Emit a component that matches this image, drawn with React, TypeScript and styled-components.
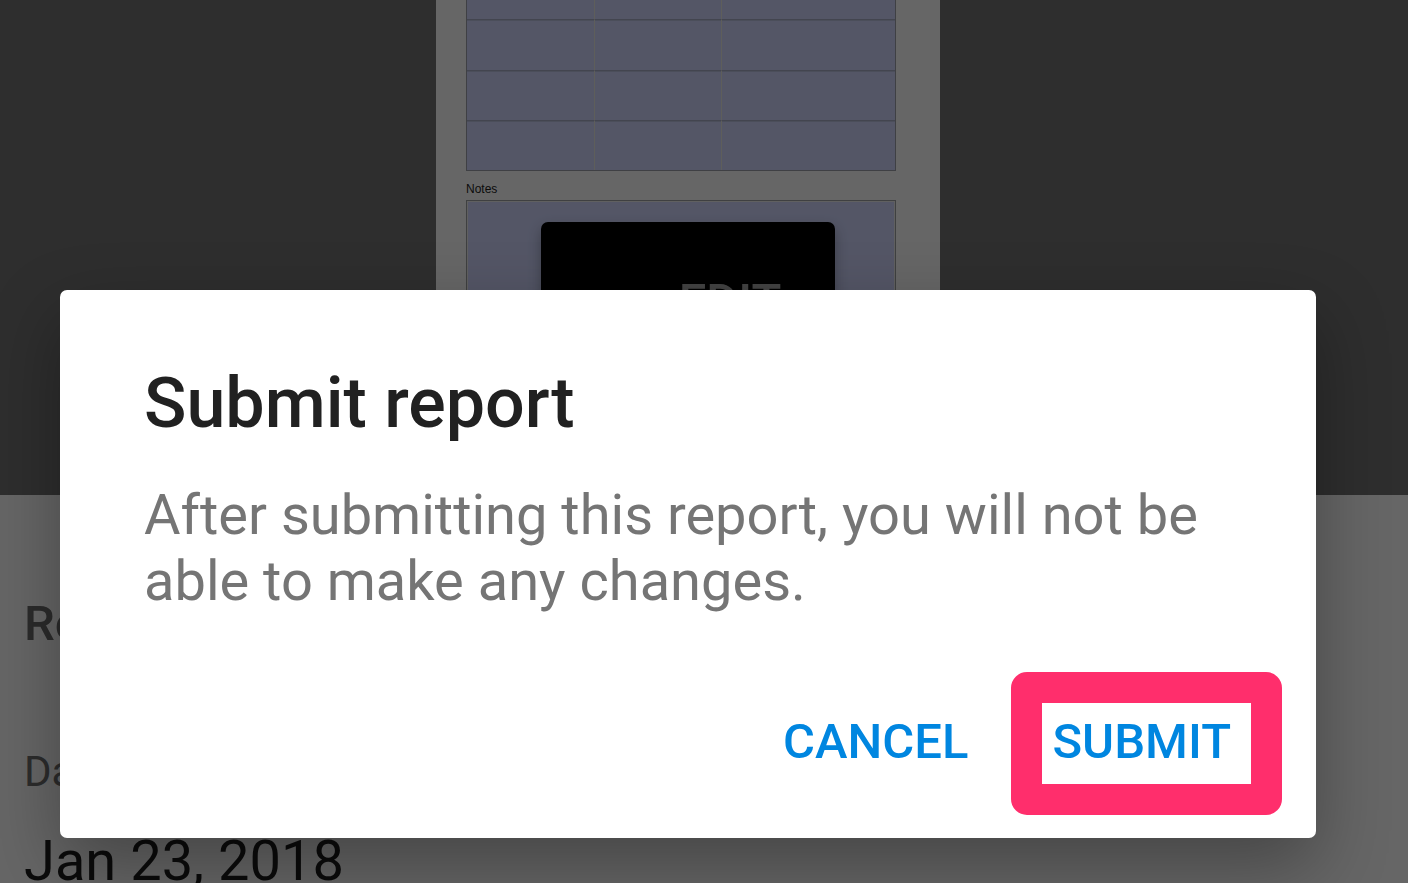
import React from "react";
import styled, { createGlobalStyle } from "styled-components";

const GlobalStyle = createGlobalStyle`
  *, *::before, *::after { box-sizing: border-box; }
  body { margin: 0; font-family: Roboto, "Liberation Sans", sans-serif; }
  h1, h2, p, dl, dt, dd { margin: 0; }
  button { border: 0; padding: 0; font-family: inherit; cursor: pointer; }
`;

const Page = styled.div`
  position: relative;
  height: 100vh;
  overflow: hidden;
  background: #ffffff;
`;

const Preview = styled.section`
  position: relative;
  display: flex;
  justify-content: center;
  height: 495px;
  padding-right: 32px;
  overflow: hidden;
  background: #737373;
`;

const Paper = styled.div`
  width: 504px;
  padding: 0 44px 0 30px;
  background: #ffffff;
`;

const FormTable = styled.table`
  width: 100%;
  table-layout: fixed;
  border-collapse: separate;
  border-spacing: 0;
  border: 1px solid #9da0aa;
  border-top: 0;
  background: #d1d7ff;
`;

const FormColumn = styled.col<{ $width: number }>`
  width: ${({ $width }) => $width}px;
`;

const FormCell = styled.td<{ $height: number }>`
  height: ${({ $height }) => $height}px;
  padding: 0;

  & + & {
    border-left: 1px solid #eceae4;
  }

  tr + tr > & {
    border-top: 1px solid #a8adc6;
    box-shadow: inset 0 1px #bcc2e2;
  }
`;

const NotesLabel = styled.label`
  display: block;
  padding: 11px 0 4px;
  font: 12px/14px "Liberation Sans", sans-serif;
  color: #222222;
`;

const NotesBox = styled.textarea`
  display: block;
  width: 100%;
  height: 340px;
  border: 1px solid #9da0a4;
  outline: 1px solid #f0f0f0;
  outline-offset: -2px;
  border-radius: 0;
  background: #d1d7ff;
  resize: none;
`;

const PreviewOverlay = styled.div`
  position: absolute;
  inset: 222px 32px auto 0;
  display: flex;
  justify-content: center;
`;

const EditButton = styled.button`
  width: 294px;
  height: 160px;
  padding: 0 0 0 84px;
  border-radius: 7px;
  background: #000000;
  box-shadow: 0 6px 14px rgba(0, 0, 0, 0.3);
  color: #a8a8a8;
  font-size: 49px;
  font-weight: 500;
  line-height: 58px;
`;

const Details = styled.section`
  padding: 100px 24px 0;
`;

const DetailsTitle = styled.h2`
  color: #6c6c6c;
  font-size: 49px;
  font-weight: 500;
  line-height: 58px;
`;

const FieldList = styled.dl`
  padding-top: 94px;
`;

const FieldName = styled.dt`
  color: #6e6e6e;
  font-size: 42px;
  line-height: 50px;
`;

const FieldValue = styled.dd`
  padding-top: 31px;
  color: #1c1c1c;
  font-size: 56px;
  line-height: 66px;
`;

const Scrim = styled.div`
  position: absolute;
  inset: 0;
  padding: 290px 92px 45px 60px;
  background: rgba(0, 0, 0, 0.6);
`;

const Dialog = styled.div`
  padding: 72px 34px 23px 84px;
  border-radius: 7px;
  background: #ffffff;
  box-shadow: 0 28px 72px rgba(0, 0, 0, 0.32);
`;

const DialogTitle = styled.h1`
  color: #212121;
  font-size: 70px;
  font-weight: 500;
  line-height: 82px;
`;

const DialogText = styled.p`
  padding: 38px 50px 0 0;
  color: #757575;
  font-size: 56px;
  line-height: 66px;
`;

const Actions = styled.div`
  display: flex;
  align-items: center;
  justify-content: flex-end;
  gap: 43px;
  padding-top: 58px;
`;

const ActionButton = styled.button`
  padding-bottom: 3px;
  background: transparent;
  color: #0086e0;
  font-size: 49px;
  font-weight: 500;
  line-height: 58px;
`;

const Highlight = styled.div`
  display: flex;
  align-items: center;
  height: 143px;
  padding: 0 20px 0 10px;
  border: 31px solid #ff2e6c;
  border-radius: 16px;
`;

const rowHeights = [19, 51, 50, 50];
const columnWidths = [127, 127, 174];

export default function App() {
  return (
    <>
      <GlobalStyle />
      <Page>
        <Preview>
          <Paper>
            <FormTable>
              <colgroup>
                {columnWidths.map((width, i) => (
                  <FormColumn key={i} $width={width} />
                ))}
              </colgroup>
              <tbody>
                {rowHeights.map((height, row) => (
                  <tr key={row}>
                    {columnWidths.map((_, col) => (
                      <FormCell key={col} $height={height} />
                    ))}
                  </tr>
                ))}
              </tbody>
            </FormTable>
            <NotesLabel htmlFor="notes">Notes</NotesLabel>
            <NotesBox id="notes" />
          </Paper>
          <PreviewOverlay>
            <EditButton type="button">EDIT</EditButton>
          </PreviewOverlay>
        </Preview>
        <Details>
          <DetailsTitle>Report</DetailsTitle>
          <FieldList>
            <FieldName>Date</FieldName>
            <FieldValue>Jan 23, 2018</FieldValue>
          </FieldList>
        </Details>
        <Scrim>
          <Dialog role="dialog" aria-modal="true" aria-labelledby="dialog-title">
            <DialogTitle id="dialog-title">Submit report</DialogTitle>
            <DialogText>
              After submitting this report, you will not be able to make any
              changes.
            </DialogText>
            <Actions>
              <ActionButton type="button">CANCEL</ActionButton>
              <Highlight>
                <ActionButton type="button">SUBMIT</ActionButton>
              </Highlight>
            </Actions>
          </Dialog>
        </Scrim>
      </Page>
    </>
  );
}
